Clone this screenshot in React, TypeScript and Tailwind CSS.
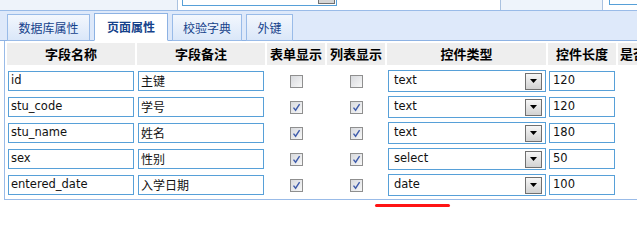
import React from "react";

type Row = {
  name: string;
  remark: string;
  form: boolean;
  list: boolean;
  type: string;
  len: string;
};

const rows: Row[] = [
  { name: "id", remark: "主键", form: false, list: false, type: "text", len: "120" },
  { name: "stu_code", remark: "学号", form: true, list: true, type: "text", len: "120" },
  { name: "stu_name", remark: "姓名", form: true, list: true, type: "text", len: "180" },
  { name: "sex", remark: "性别", form: true, list: true, type: "select", len: "50" },
  { name: "entered_date", remark: "入学日期", form: true, list: true, type: "date", len: "100" },
];

const latin = { fontFamily: '"DejaVu Sans", "Noto Sans CJK SC", sans-serif' };
const cjk = { fontFamily: '"Noto Sans CJK SC", "DejaVu Sans", sans-serif' };

function Check({ checked }: { checked: boolean }) {
  return (
    <span className="flex h-[13px] w-[13px] items-center justify-center border border-[#8f8f8f] bg-gradient-to-br from-[#d8dade] to-[#f7f7f7]">
      {checked && (
        <svg width="9" height="9" viewBox="0 0 9 9">
          <path d="M1.5 4.6 L3.6 7.2 L7.6 1.2" fill="none" stroke="#3f5cab" strokeWidth="1.4" />
        </svg>
      )}
    </span>
  );
}

function Combo({ value }: { value: string }) {
  return (
    <div className="flex h-[22px] w-[158px] items-center border border-[#57a0d8] bg-white pl-[5px] pr-[3px]">
      <span className="flex-1 text-[11.5px] leading-none text-[#111]" style={latin}>
        {value}
      </span>
      <span className="flex h-[17px] w-[17px] items-center justify-center border border-[#707070] bg-gradient-to-b from-[#f7f7f7] to-[#d2d2d2]">
        <svg width="7" height="4" viewBox="0 0 7 4">
          <path d="M0 0 H7 L3.5 4 Z" fill="#000" />
        </svg>
      </span>
    </div>
  );
}

function Tab({ label, width, active }: { label: string; width: string; active?: boolean }) {
  return (
    <div
      className={
        active
          ? `${width} -mb-px flex h-[28px] items-center justify-center border border-b-white border-[#8db2e3] bg-white text-[12px] font-bold text-[#15428b]`
          : `${width} -mb-px flex h-[27px] items-center justify-center border border-[#99bbe8] bg-gradient-to-b from-[#f3f7fd] to-[#dae7f9] text-[12px] text-[#15428b]`
      }
      style={cjk}
    >
      {label}
    </div>
  );
}

const cols = "grid grid-cols-[128px_128px_58px_58px_159px_68px_56px] gap-x-[2px]";

export default function App() {
  const headers = ["字段名称", "字段备注", "表单显示", "列表显示", "控件类型", "控件长度", "是否必填"];
  return (
    <div className="relative h-[240px] w-[637px] overflow-hidden bg-white">
      {/* top strip */}
      <div className="flex h-[10px]">
        <div className="w-[177px] bg-[#eef3fa]" />
        <div className="w-px bg-[#aac2e0]" />
        <div className="flex w-[322px] items-start bg-white pl-[4px]">
          <div className="flex h-[6px] w-[155px] items-start justify-end border-x border-b border-[#57a0d8] pr-[1px]">
            <div className="h-[4px] w-[17px] border-x border-b border-[#707070] bg-[#d6d6d6]" />
          </div>
        </div>
        <div className="w-px bg-[#aac2e0]" />
        <div className="w-[101px] bg-[#eef4fb]" />
        <div className="w-px bg-[#aac2e0]" />
        <div className="flex flex-1 items-start bg-white pl-[6px]">
          <div className="h-[5px] flex-1 border-b border-l border-[#57a0d8]" />
        </div>
      </div>

      {/* tab strip */}
      <div className="flex h-[31px] items-end gap-[4px] border-y border-t-[#99bbe8] border-b-[#8db2e3] bg-[#dee9fa] pl-[7px]">
        <Tab label="数据库属性" width="w-[83px]" />
        <Tab label="页面属性" width="w-[74px]" active />
        <Tab label="校验字典" width="w-[70px]" />
        <Tab label="外键" width="w-[47px]" />
      </div>

      {/* panel */}
      <div className="ml-[4px] w-[700px] border-b border-l border-[#99bbe8] pb-[1px] pl-[2px] pt-[2px]">
        <div className={cols}>
          {headers.map((h) => (
            <div
              key={h}
              className="flex h-[22px] items-center justify-center whitespace-nowrap bg-[#eeeeee] text-[13px] font-bold text-black"
              style={cjk}
            >
              {h}
            </div>
          ))}
        </div>
        <div className="mt-[3px]">
          {rows.map((r) => (
            <div key={r.name} className={`${cols} h-[26px] items-center`}>
              <div className="px-[1px]">
                <div
                  className="flex h-[20px] items-center border border-[#57a0d8] pl-[2px] text-[11.5px] text-[#111]"
                  style={latin}
                >
                  {r.name}
                </div>
              </div>
              <div className="px-[1px]">
                <div
                  className="flex h-[20px] items-center border border-[#57a0d8] pl-[2px] text-[12px] text-[#111]"
                  style={cjk}
                >
                  {r.remark}
                </div>
              </div>
              <div className="flex justify-center">
                <Check checked={r.form} />
              </div>
              <div className="flex justify-center">
                <Check checked={r.list} />
              </div>
              <div className="px-[1px]">
                <Combo value={r.type} />
              </div>
              <div className="px-[1px]">
                <div
                  className="flex h-[20px] items-center border border-[#57a0d8] pl-[3px] text-[11.5px] text-[#111]"
                  style={latin}
                >
                  {r.len}
                </div>
              </div>
              <div className="flex justify-center">
                <Check checked={false} />
              </div>
            </div>
          ))}
        </div>
      </div>

      {/* red annotation stroke */}
      <div className="absolute left-[375px] top-[204px] h-[3px] w-[75px] rounded-full bg-[#ff1414]" />
    </div>
  );
}
